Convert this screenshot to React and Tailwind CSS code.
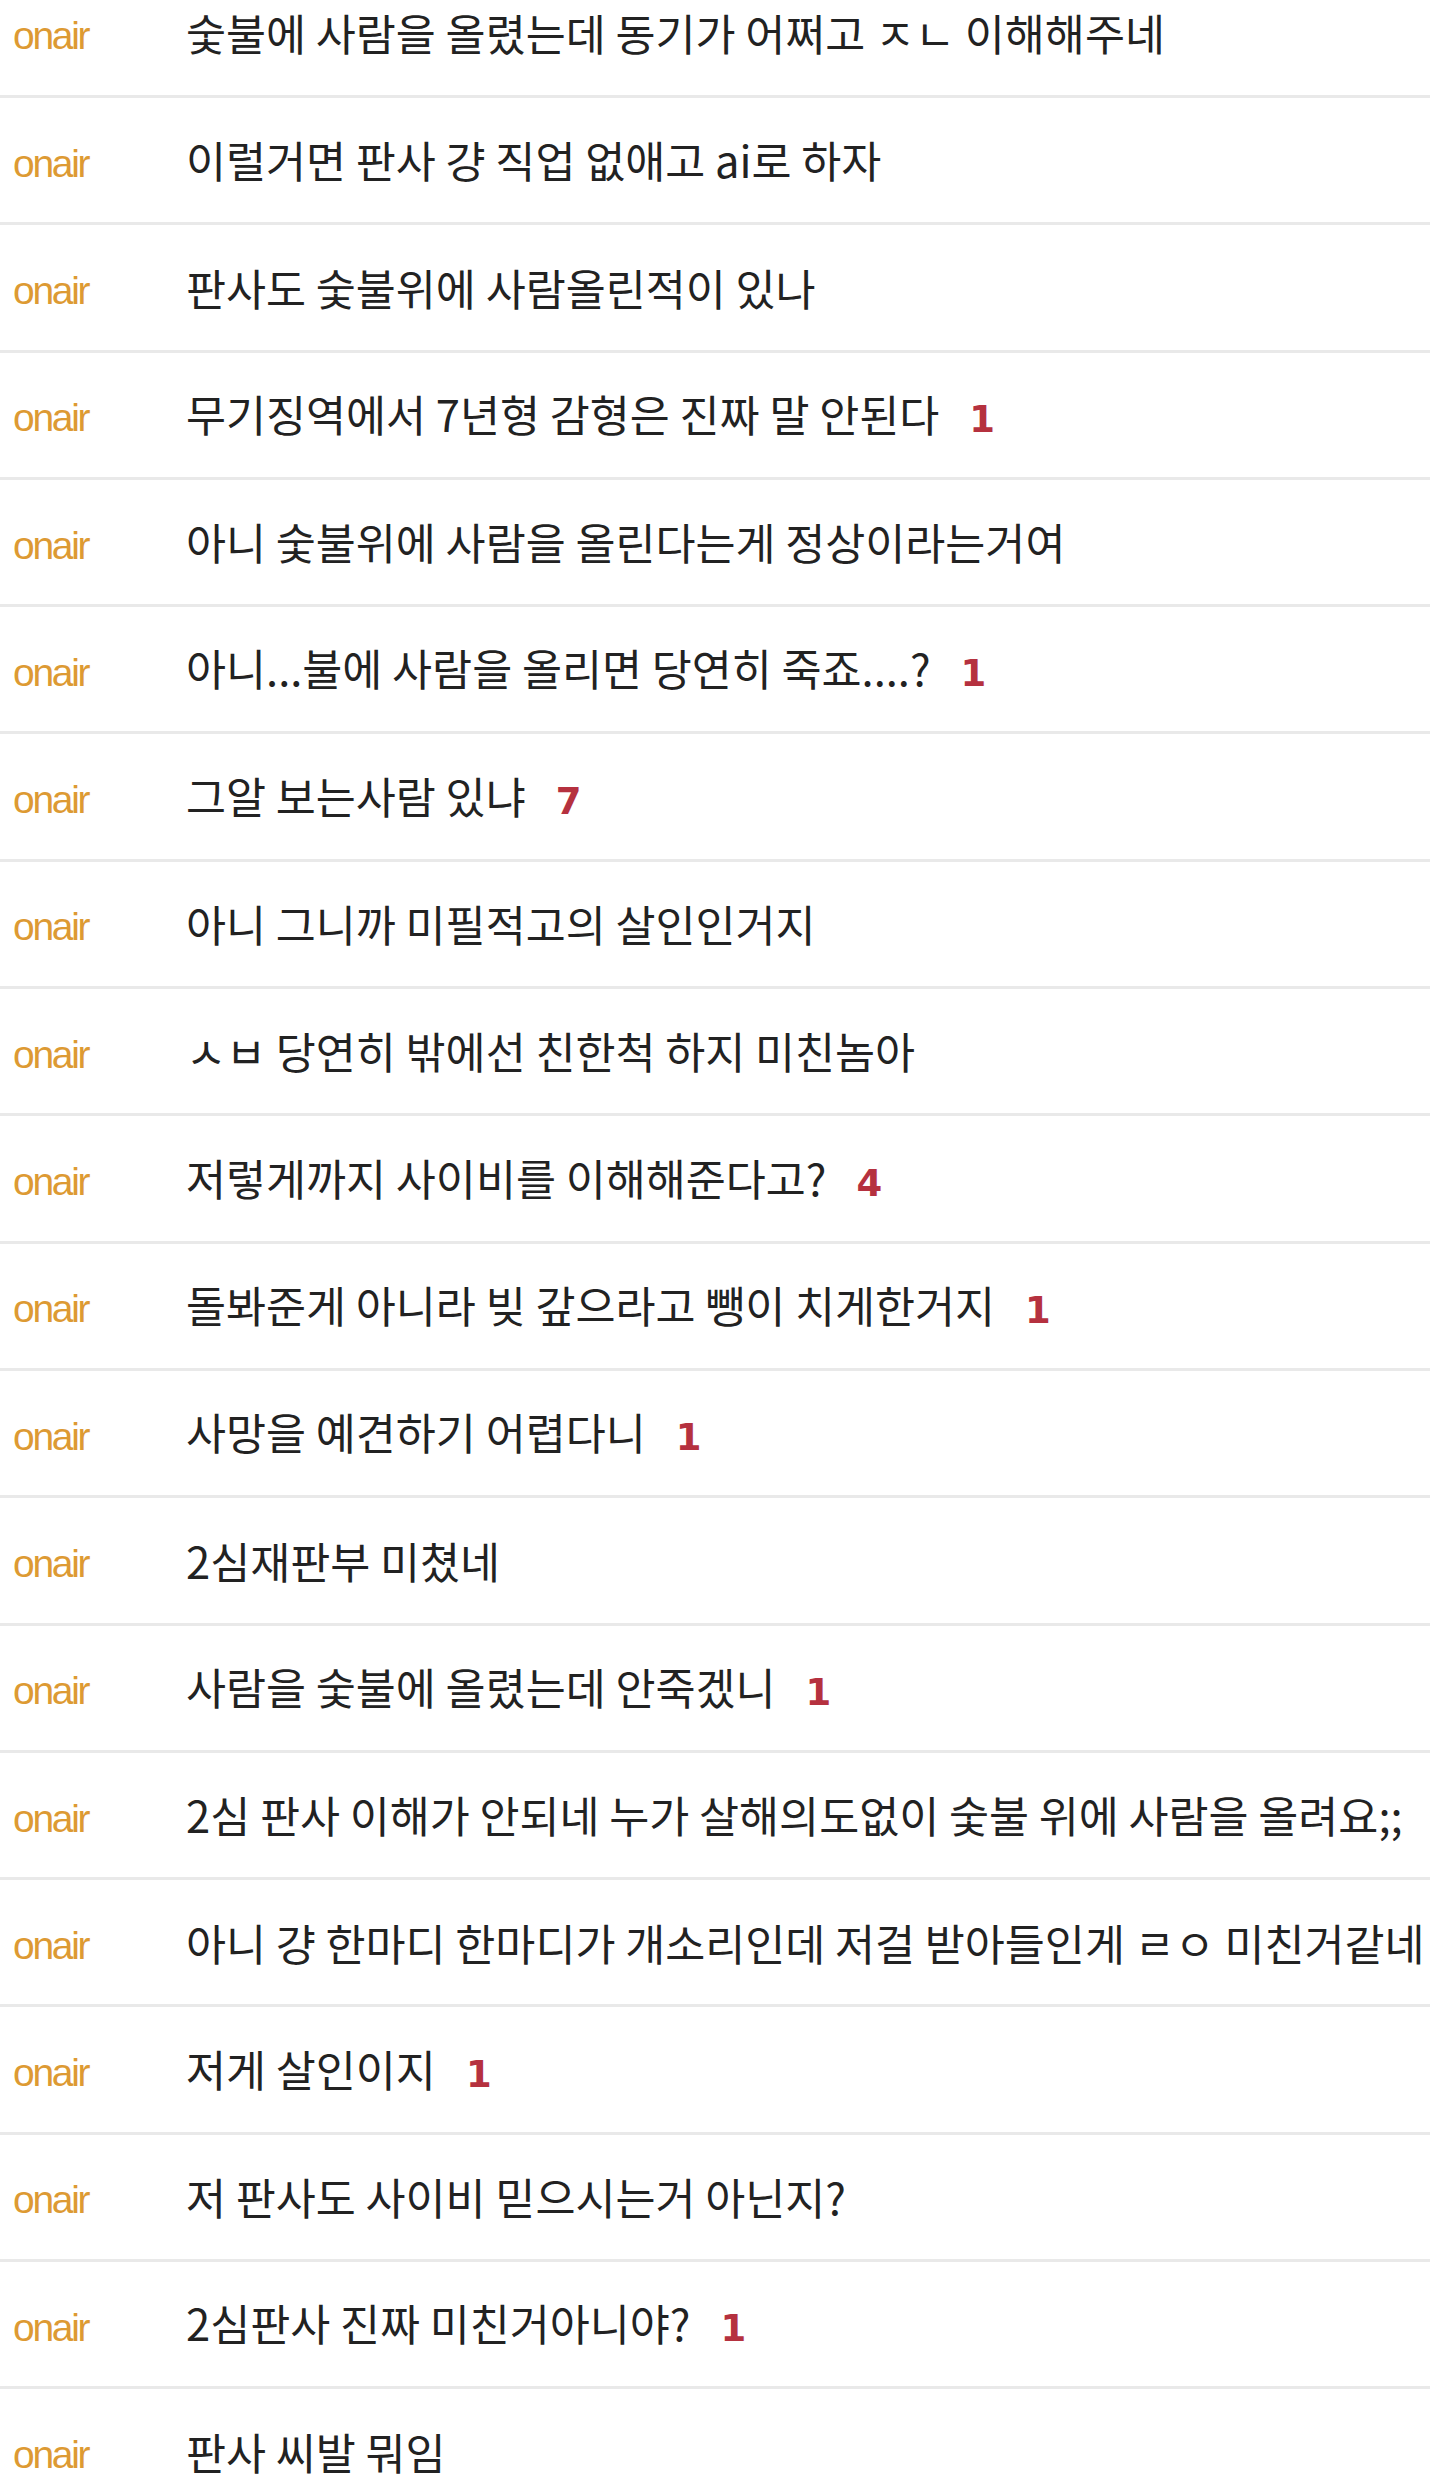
import React from 'react';

// 댓글 목록: [본문, 추천수]
const comments = [
  ['숯불에 사람을 올렸는데 동기가 어쩌고 ㅈㄴ 이해해주네'],
  ['이럴거면 판사 걍 직업 없애고 ai로 하자'],
  ['판사도 숯불위에 사람올린적이 있나'],
  ['무기징역에서 7년형 감형은 진짜 말 안된다', 1],
  ['아니 숯불위에 사람을 올린다는게 정상이라는거여'],
  ['아니...불에 사람을 올리면 당연히 죽죠....?', 1],
  ['그알 보는사람 있냐', 7],
  ['아니 그니까 미필적고의 살인인거지'],
  ['ㅅㅂ 당연히 밖에선 친한척 하지 미친놈아'],
  ['저렇게까지 사이비를 이해해준다고?', 4],
  ['돌봐준게 아니라 빚 갚으라고 뺑이 치게한거지', 1],
  ['사망을 예견하기 어렵다니', 1],
  ['2심재판부 미쳤네'],
  ['사람을 숯불에 올렸는데 안죽겠니', 1],
  ['2심 판사 이해가 안되네 누가 살해의도없이 숯불 위에 사람을 올려요;;'],
  ['아니 걍 한마디 한마디가 개소리인데 저걸 받아들인게 ㄹㅇ 미친거같네'],
  ['저게 살인이지', 1],
  ['저 판사도 사이비 믿으시는거 아닌지?'],
  ['2심판사 진짜 미친거아니야?', 1],
  ['판사 씨발 뭐임'],
];

function CommentRow({ text, count }) {
  return (
    <li className="flex h-[127.3px] items-center border-b-[3px] border-[#e9e9e9] pl-[13px]">
      <span className="w-[173px] shrink-0 translate-y-[3px] font-['Liberation_Sans',Arial,sans-serif] text-[39px] leading-none tracking-[-2.3px] text-[#dd9a33]">
        onair
      </span>
      <span className="flex items-baseline whitespace-nowrap">
        <span className="font-['Noto_Sans_CJK_KR',sans-serif] text-[43.5px] font-normal leading-none text-[#222]">
          {text}
        </span>
        {count && (
          <span className="ml-[30px] font-['DejaVu_Sans',sans-serif] text-[37px] font-bold leading-none text-[#b5313f]">
            {count}
          </span>
        )}
      </span>
    </li>
  );
}

export default function App() {
  return (
    <div className="h-[2482px] overflow-hidden bg-white">
      <ul className="-mt-[29.3px]">
        {comments.map(([text, count], i) => (
          <CommentRow key={i} text={text} count={count} />
        ))}
      </ul>
    </div>
  );
}
